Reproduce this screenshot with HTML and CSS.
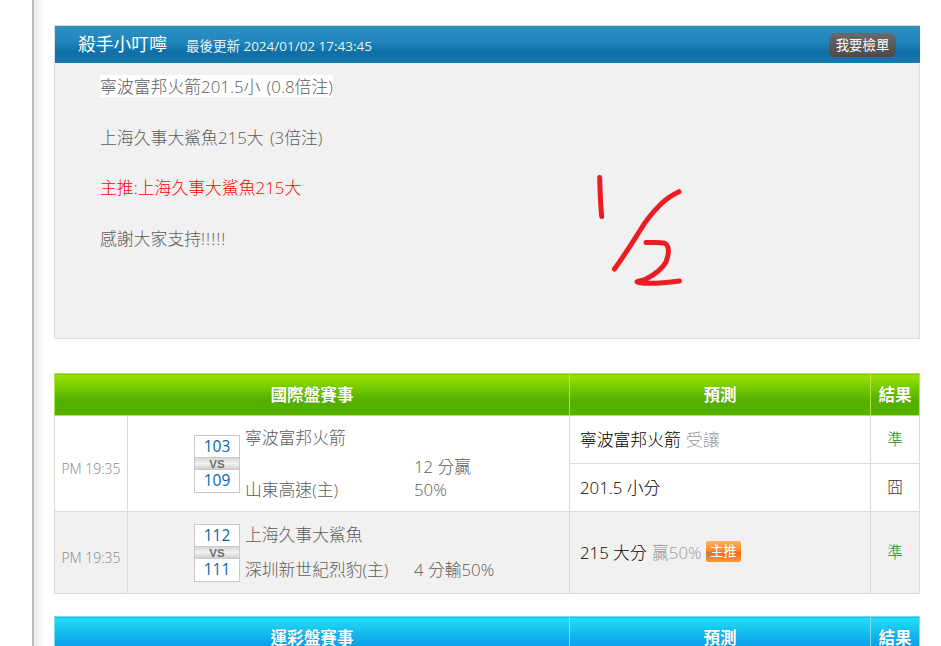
FILE: index.html
```html
<!DOCTYPE html>
<html lang="zh-Hant">
<head>
<meta charset="utf-8">
<title>殺手小叮嚀</title>
<link rel="stylesheet" href="styles.css">
</head>
<body>
<div class="page">
  <main class="content">
    <section class="panel">
      <header class="panel-head">
        <h1 class="panel-title">殺手小叮嚀</h1>
        <span class="panel-date">最後更新 2024/01/02 17:43:45</span>
        <a class="panel-btn">我要檢單</a>
      </header>
      <div class="panel-body">
        <p class="note"><span class="note-hl">寧波富邦火箭201.5小 (0.8倍注)</span></p>
        <p class="note">上海久事大鯊魚215大 (3倍注)</p>
        <p class="note note-main">主推:上海久事大鯊魚215大</p>
        <p class="note">感謝大家支持<span class="bangs">!!!!!</span></p>
      </div>
    </section>

    <table class="games games-green">
      <colgroup><col class="c-time"><col class="c-match"><col class="c-pred"><col class="c-res"></colgroup>
      <thead><tr><th colspan="2">國際盤賽事</th><th>預測</th><th>結果</th></tr></thead>
      <tbody>
        <tr class="r-sub">
          <td rowspan="2" class="time">PM 19:35</td>
          <td rowspan="2" class="match">
            <div class="match-in">
              <div class="score"><b>103</b><i>VS</i><b>109</b></div>
              <div class="teams teams-wrap">
                <div class="team">寧波富邦火箭</div>
                <div class="team">山東高速(主)</div>
                <div class="outcome">12 分贏 50%</div>
              </div>
            </div>
          </td>
          <td class="pred">寧波富邦火箭 <span class="muted">受讓</span></td>
          <td class="res win">準</td>
        </tr>
        <tr class="r-sub">
          <td class="pred">201.5 小分</td>
          <td class="res">囧</td>
        </tr>
        <tr class="r-alt">
          <td class="time">PM 19:35</td>
          <td class="match">
            <div class="match-in">
              <div class="score"><b>112</b><i>VS</i><b>111</b></div>
              <div class="teams">
                <div class="team">上海久事大鯊魚</div>
                <div class="team">深圳新世紀烈豹(主)</div>
                <div class="outcome">4 分輸50%</div>
              </div>
            </div>
          </td>
          <td class="pred">215 大分 <span class="muted">贏50%</span> <span class="badge">主推</span></td>
          <td class="res win">準</td>
        </tr>
      </tbody>
    </table>

    <table class="games games-blue">
      <colgroup><col class="c-time"><col class="c-match"><col class="c-pred"><col class="c-res"></colgroup>
      <thead><tr><th colspan="2">運彩盤賽事</th><th>預測</th><th>結果</th></tr></thead>
    </table>
  </main>
</div>
<svg class="scribble" width="941" height="646" viewBox="0 0 941 646" aria-hidden="true">
  <path d="M599.700 177.500 C600 190 600.300 203 601.700 216.500"/>
  <path d="M679 191.700 C672 195 667 198 661 204 C652 213 645 222 641 229 C632 243 624 256 614.500 269"/>
  <path d="M646 242.500 C654 242.500 660 242 664 243 C670 245 669 254 666 262 C661 271 652 276 646 279 C640 281.500 634 281 639 282.500 C650 284.500 668 282.500 679.500 281"/>
</svg>
</body>
</html>
```
FILE: styles.css
```css
* { box-sizing: border-box; }
html, body { margin: 0; height: 646px; overflow: hidden; background: #fff; }
body { font-family: "Open Sans", "Noto Sans CJK TC", sans-serif; font-size: 16px; font-weight: 300; color: #666; }

.page {
  height: 646px;
  margin-left: 32px;
  border-left: 2px solid #bdbdbd;
  background: linear-gradient(90deg, #ececec 0, #fff 10px);
  padding: 25px 21px 0 20px;
  width: 909px;
}
.content { width: 866px; }

.panel { border: 1px solid #dcdcdc; background: #f1f1f1; height: 314px; }
.panel-head {
  height: 37px;
  margin: 0 -1px 0 0;
  display: flex;
  align-items: center;
  padding: 0 24px 0 23px;
  color: #fff;
  background: linear-gradient(180deg, #2c90c5 0, #2287bd 40%, #0e6fa6 72%, #177ab0 100%);
}
.panel-title { margin: 0; font-size: 17.800px; font-weight: 400; line-height: 37px; color: #fff; }
.panel-date { margin-left: 19px; font-size: 13.500px; font-weight: 400; color: #e8f2f8; }
.panel-btn {
  margin-left: auto;
  width: 67px;
  height: 24px;
  line-height: 24px;
  text-align: center;
  font-size: 13.400px;
  font-weight: 400;
  color: #fff;
  border-radius: 6px;
  background: linear-gradient(180deg, #6a6a6a 0, #4a4a4a 100%);
}
.panel-body { padding: 11px 0 0 45px; }
.note { margin: 0 0 25.500px; font-size: 16.850px; line-height: 25px; color: #5c5c5c; word-spacing: 2px; }
.note-hl { background: #fff; display: inline-block; height: 22px; line-height: 24px; }
.note-main { color: #f00; }
.bangs { letter-spacing: 1px; }

.games { border-collapse: collapse; table-layout: fixed; width: 865px; }
.games-green { margin-top: 34px; }
.games-blue { margin-top: 22px; }
.c-time { width: 73px; }
.c-match { width: 442px; }
.c-pred { width: 301px; }
.c-res { width: 49px; }
.games th {
  height: 42px;
  color: #fff;
  font-size: 16.600px;
  font-weight: 700;
  text-shadow: 0 0 1px rgba(0, 0, 0, .25);
  padding: 0 0 2px;
}
.games-green th { background: linear-gradient(180deg, #9ce200 0, #7dcf00 25%, #55b100 62%, #55b100 100%); border: 1px solid #b5e54a; }
.games-blue th { background: linear-gradient(180deg, #22def5 0, #0ea6ea 60%, #0a9be4 100%); border: 1px solid #7fdcf0; }
.games td { border: 1px solid #d9d9d9; padding: 0; }
.r-sub td { height: 48px; }
.r-alt td { background: #f1f1f1; height: 82px; }
.games .time { text-align: center; font-size: 14px; color: #888; padding-top: 10px; }
.match-in { display: flex; align-items: center; padding-left: 66px; }
.score {
  width: 46px;
  height: 58px;
  flex: none;
  display: flex;
  flex-direction: column;
  border: 1px solid #c8c8c8;
  background: #fff;
}
.score b {
  flex: 1;
  font-weight: 400;
  font-size: 15.500px;
  line-height: 21px;
  text-align: center;
  color: #0b66a8;
}
.score i {
  height: 13px;
  flex: none;
  font-style: normal;
  font-weight: 700;
  font-size: 11.500px;
  line-height: 12px;
  text-align: center;
  color: #6e6e6e;
  font-family: "Liberation Sans", sans-serif;
  border-top: 1px solid #c8c8c8;
  border-bottom: 1px solid #c8c8c8;
  background: linear-gradient(180deg, #d8d8d8, #f2f2f2 50%, #d0d0d0);
}
.teams {
  margin-left: 5px;
  padding-bottom: 1px;
  display: grid;
  grid-template-columns: 169px 82px;
  grid-template-rows: 29px 29px;
  row-gap: 6px;
  align-items: end;
  font-size: 16.800px;
  color: #5c5c5c;
}
.teams-wrap { grid-template-rows: 29px 46px; }
.team { line-height: 29px; grid-column: 1; }
.outcome { grid-column: 2; grid-row: 2; line-height: 23px; margin-bottom: 3px; white-space: nowrap; }
.teams-wrap .outcome { white-space: normal; width: 64px; }
.games .pred { padding: 0 0 2px 10px; font-size: 16.800px; color: #000; }
.muted { color: #999; margin-left: 1px; }
.badge {
  display: inline-block;
  height: 21px;
  width: 35px;
  margin-left: 0;
  border-radius: 2px;
  text-align: center;
  font-size: 13.400px;
  font-weight: 400;
  line-height: 21px;
  color: #fff;
  vertical-align: 3px;
  background: linear-gradient(180deg, #ffb15e 0, #f98a2c 45%, #ee6d14 55%, #f7973d 100%);
}
.games .res { padding: 0 0 2px; text-align: center; font-size: 15.500px; color: #333; }
.games .win { color: #0a8a2a; }

.scribble { position: absolute; left: 0; top: 0; pointer-events: none; }
.scribble path { fill: none; stroke: #ec1c24; stroke-width: 5; stroke-linecap: round; stroke-linejoin: round; }
```
